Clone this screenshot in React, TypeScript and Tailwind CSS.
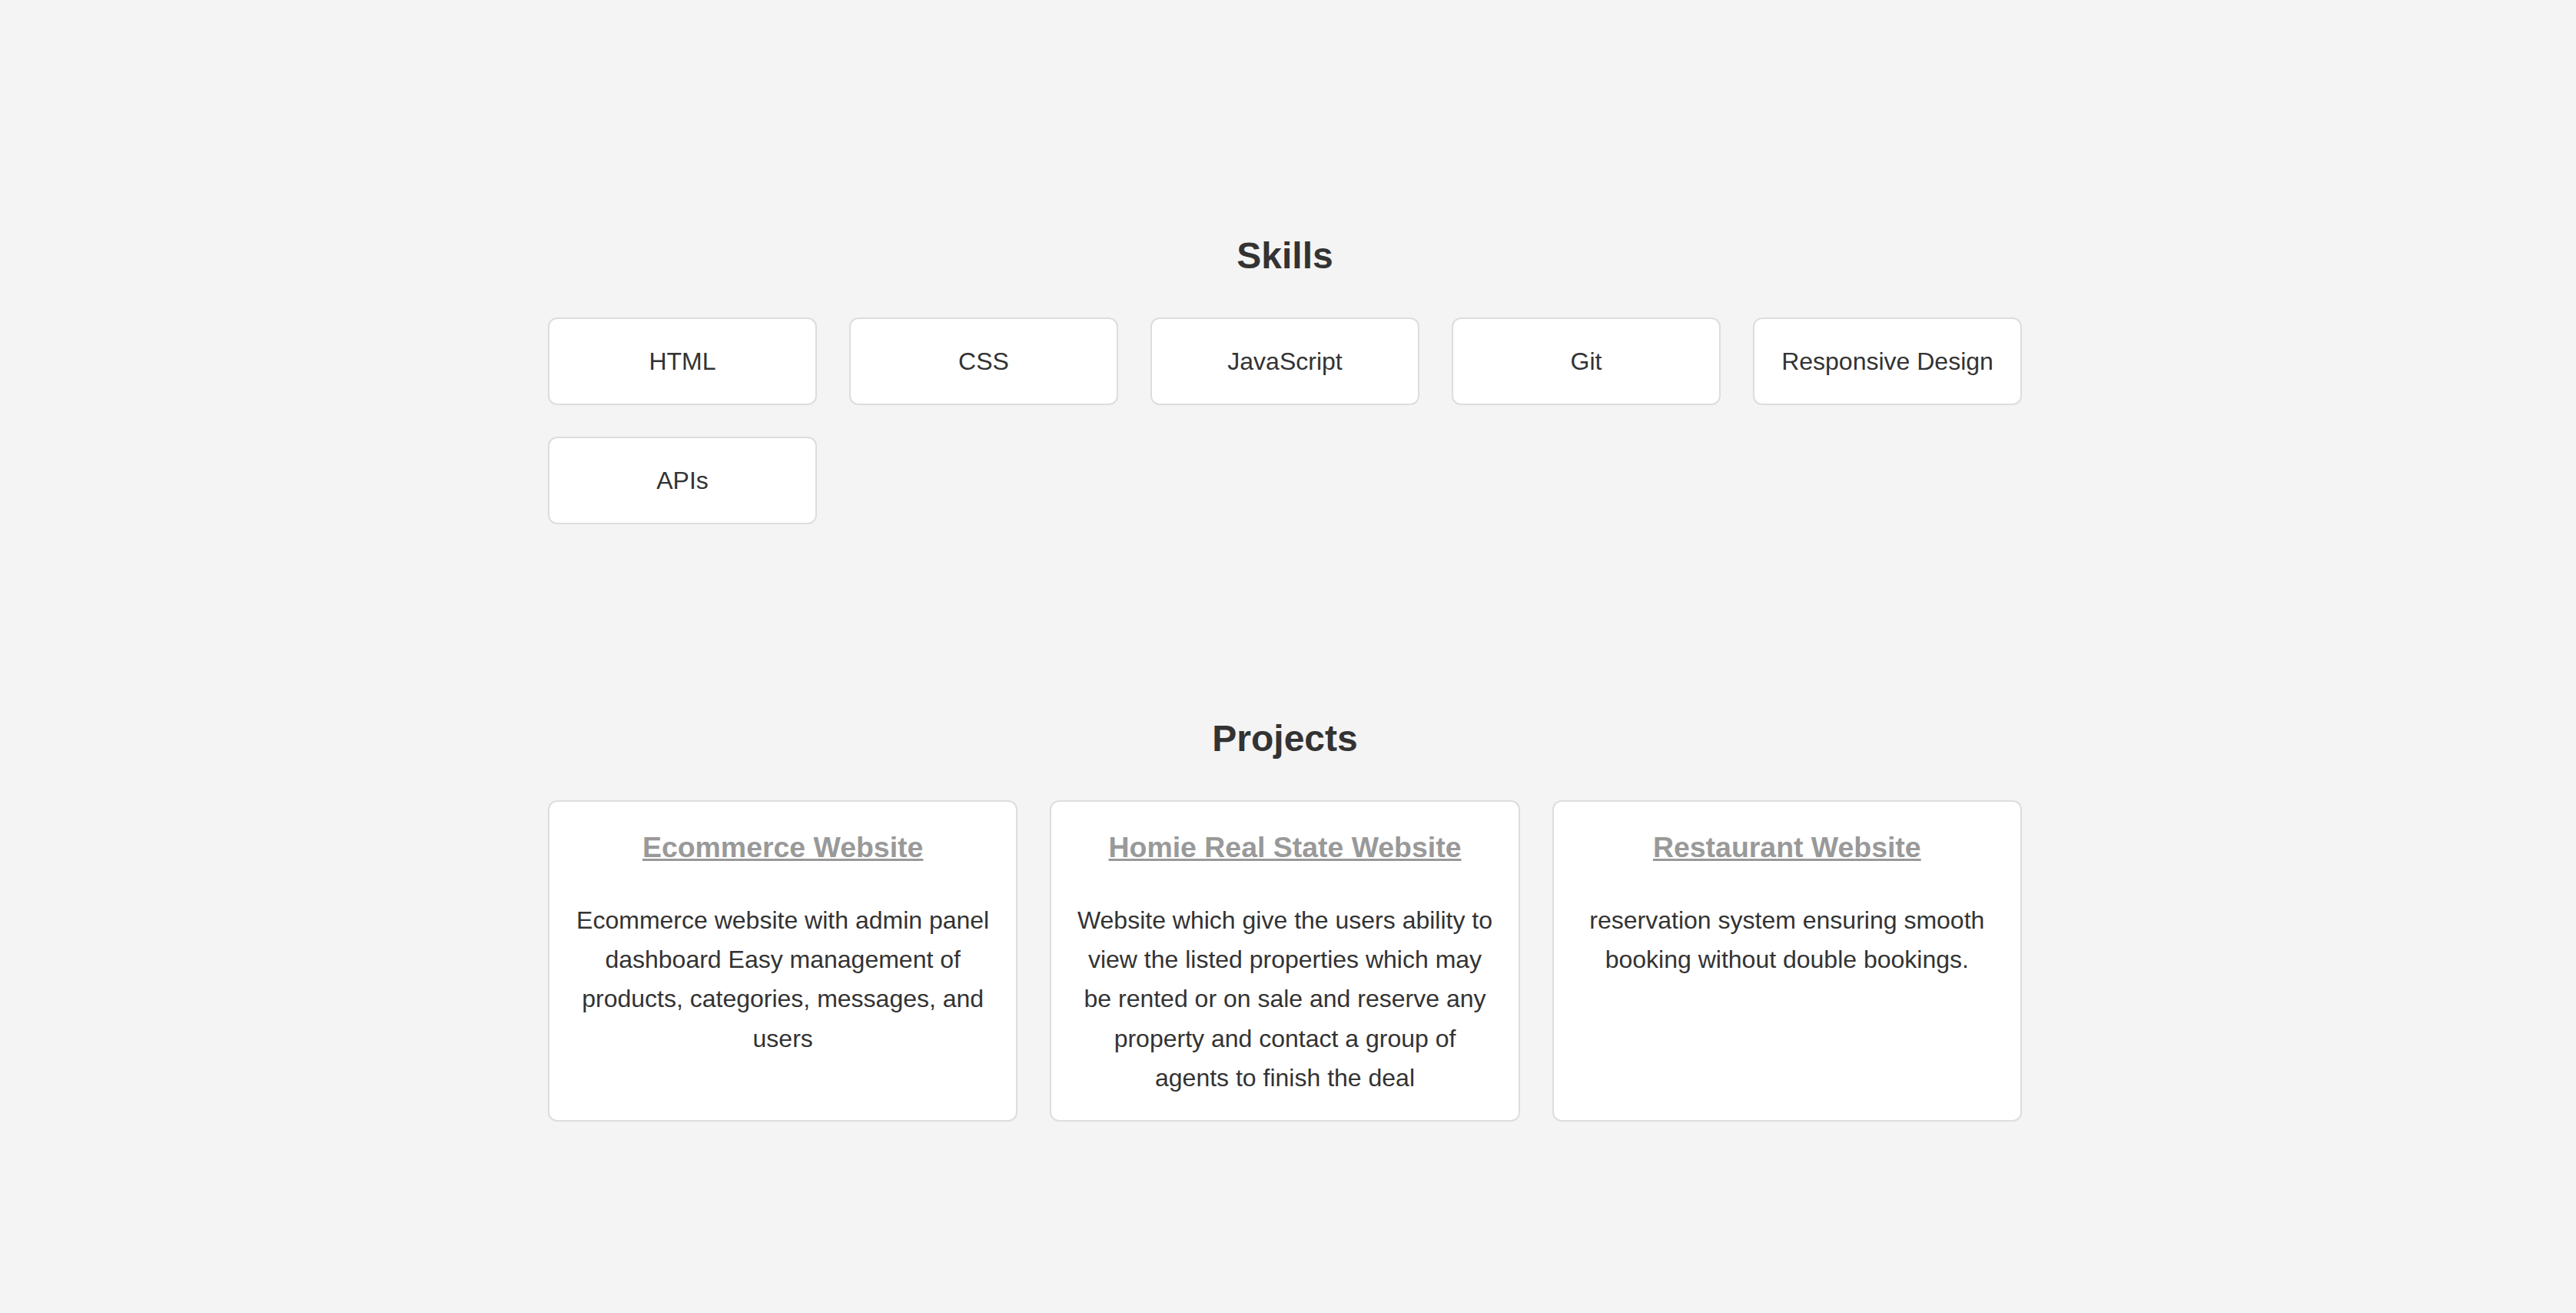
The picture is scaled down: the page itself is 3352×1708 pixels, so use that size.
const skills = ["HTML", "CSS", "JavaScript", "Git", "Responsive Design", "APIs"];

const projects = [
  {
    title: "Ecommerce Website",
    description:
      "Ecommerce website with admin panel dashboard Easy management of products, categories, messages, and users",
  },
  {
    title: "Homie Real State Website",
    description:
      "Website which give the users ability to view the listed properties which may be rented or on sale and reserve any property and contact a group of agents to finish the deal",
  },
  {
    title: "Restaurant Website",
    description: "reservation system ensuring smooth booking without double bookings.",
  },
];

export default function App() {
  return (
    <div className="min-h-screen bg-[#f4f4f4] pr-[8px] font-['Liberation_Sans',Arial,sans-serif] text-[#333]">
      <div className="mx-auto w-[1918px] pt-[305px] pb-[200px]">
        <section id="skills">
          <h2 className="mb-[52px] text-center text-[48px] font-bold leading-[56px]">Skills</h2>
          <div className="grid grid-cols-5 gap-x-[42px] gap-y-[41px]">
            {skills.map((skill) => (
              <div
                key={skill}
                className="flex h-[114px] items-center justify-center rounded-[12px] border-2 border-[#dddddd] bg-white text-[32px]"
              >
                {skill}
              </div>
            ))}
          </div>
        </section>

        <section id="projects" className="mt-[251px]">
          <h2 className="mb-[52px] text-center text-[48px] font-bold leading-[56px]">Projects</h2>
          <div className="grid grid-cols-3 gap-[42px]">
            {projects.map((project) => (
              <div
                key={project.title}
                className="rounded-[12px] border-2 border-[#dddddd] bg-white px-[32px] pt-[35px] pb-[29px] text-center"
              >
                <h3 className="text-[37.44px] font-bold leading-[48px]">
                  <a href="#" className="text-[#999] underline">
                    {project.title}
                  </a>
                </h3>
                <p className="mt-[46px] text-[32px] leading-[51.2px]">{project.description}</p>
              </div>
            ))}
          </div>
        </section>
      </div>
    </div>
  );
}
